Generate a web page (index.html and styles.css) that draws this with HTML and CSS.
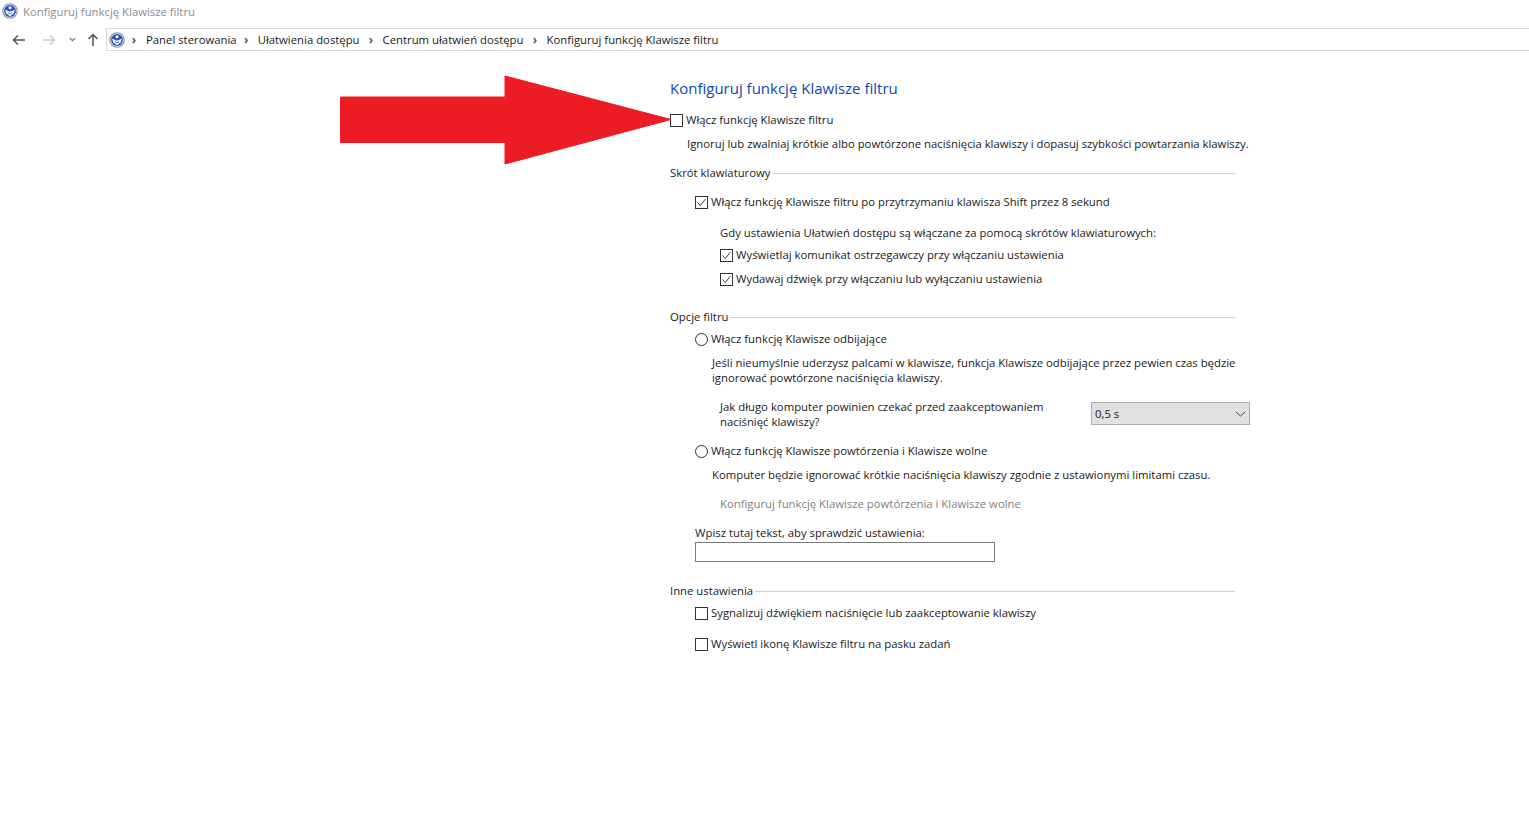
FILE: index.html
```html
<!DOCTYPE html>
<html lang="pl">
<head>
<meta charset="utf-8">
<title>Konfiguruj funkcję Klawisze filtru</title>
<link rel="stylesheet" href="styles.css">
</head>
<body>
<div class="titlebar">
  <svg class="globe" viewBox="0 0 16 16"><circle cx="8" cy="8" r="7.800" fill="#8b90a0"/><circle cx="8" cy="8" r="6.700" fill="#dfe4f2"/><circle cx="8" cy="8" r="5.900" fill="#2b50c4"/><circle cx="8" cy="4.800" r="1.500" fill="#fff"/><path d="M3.200 6.800 8 8.800l4.800-2-.9 3.400L8 13.200l-3.900-3z" fill="#fff"/><path d="M6 9.800 8 11l2-1.200" fill="none" stroke="#2b50c4" stroke-width=".8"/></svg>
  <span class="title-text">Konfiguruj funkcję Klawisze filtru</span>
</div>
<div class="navbar">
  <svg class="nav-icon back" viewBox="0 0 14 12"><path d="M13 6H1.500M6 1.500 1.500 6 6 10.500" fill="none" stroke="#555" stroke-width="1.500"/></svg>
  <svg class="nav-icon forward" viewBox="0 0 14 12"><path d="M1 6h11.500M8 1.500 12.500 6 8 10.500" fill="none" stroke="#ccc" stroke-width="1.500"/></svg>
  <svg class="nav-drop" viewBox="0 0 7 5"><path d="M.8 1 3.500 3.700 6.200 1" fill="none" stroke="#777" stroke-width="1.200"/></svg>
  <svg class="nav-icon up" viewBox="0 0 12 14"><path d="M6 13V1.500M1.500 6 6 1.500 10.500 6" fill="none" stroke="#555" stroke-width="1.500"/></svg>
  <div class="address">
    <svg class="globe" viewBox="0 0 16 16"><circle cx="8" cy="8" r="7.800" fill="#8b90a0"/><circle cx="8" cy="8" r="6.700" fill="#dfe4f2"/><circle cx="8" cy="8" r="5.900" fill="#2b50c4"/><circle cx="8" cy="4.800" r="1.500" fill="#fff"/><path d="M3.200 6.800 8 8.800l4.800-2-.9 3.400L8 13.200l-3.900-3z" fill="#fff"/><path d="M6 9.800 8 11l2-1.200" fill="none" stroke="#2b50c4" stroke-width=".8"/></svg>
    <span class="crumb-sep first">›</span><span class="crumb panel">Panel sterowania</span>
    <span class="crumb-sep">›</span><span class="crumb">Ułatwienia dostępu</span>
    <span class="crumb-sep">›</span><span class="crumb">Centrum ułatwień dostępu</span>
    <span class="crumb-sep">›</span><span class="crumb">Konfiguruj funkcję Klawisze filtru</span>
  </div>
</div>

<main class="content">
  <h1 class="heading">Konfiguruj funkcję Klawisze filtru</h1>
  <label class="row main-check"><span class="box"></span>Włącz funkcję Klawisze filtru</label>
  <p class="text indent-s gap-9">Ignoruj lub zwalniaj krótkie albo powtórzone naciśnięcia klawiszy i dopasuj szybkości powtarzania klawiszy.</p>

  <div class="section gap-14"><span>Skrót klawiaturowy</span><i class="rule"></i></div>
  <label class="row indent-1 gap-14"><span class="box checked"><svg viewBox="0 0 11 11"><path d="M1.500 5.500 4.300 8.500 9.500 2" fill="none" stroke="#444" stroke-width="1"/></svg></span>Włącz funkcję Klawisze filtru po przytrzymaniu klawisza Shift przez 8 sekund</label>
  <p class="text indent-2 gap-16">Gdy ustawienia Ułatwień dostępu są włączane za pomocą skrótów klawiaturowych:</p>
  <label class="row indent-2 gap-7"><span class="box checked"><svg viewBox="0 0 11 11"><path d="M1.500 5.500 4.300 8.500 9.500 2" fill="none" stroke="#444" stroke-width="1"/></svg></span>Wyświetlaj komunikat ostrzegawczy przy włączaniu ustawienia</label>
  <label class="row indent-2 gap-9"><span class="box checked"><svg viewBox="0 0 11 11"><path d="M1.500 5.500 4.300 8.500 9.500 2" fill="none" stroke="#444" stroke-width="1"/></svg></span>Wydawaj dźwięk przy włączaniu lub wyłączaniu ustawienia</label>

  <div class="section gap-23"><span>Opcje filtru</span><i class="rule"></i></div>
  <label class="row indent-1 gap-7"><span class="radio"></span>Włącz funkcję Klawisze odbijające</label>
  <p class="text indent-1b gap-9 para">Jeśli nieumyślnie uderzysz palcami w klawisze, funkcja Klawisze odbijające przez pewien czas będzie ignorować powtórzone naciśnięcia klawiszy.</p>
  <div class="wait-row indent-2 gap-14">
    <p class="text wait-label">Jak długo komputer powinien czekać przed zaakceptowaniem naciśnięć klawiszy?</p>
    <div class="select"><span>0,5 s</span><svg viewBox="0 0 11 6"><path d="M.8.800 5.500 5 10.200.800" fill="none" stroke="#444" stroke-width="1"/></svg></div>
  </div>
  <label class="row indent-1 gap-14"><span class="radio"></span>Włącz funkcję Klawisze powtórzenia i Klawisze wolne</label>
  <p class="text indent-1b gap-9">Komputer będzie ignorować krótkie naciśnięcia klawiszy zgodnie z ustawionymi limitami czasu.</p>
  <p class="text indent-2 gap-14 disabled">Konfiguruj funkcję Klawisze powtórzenia i Klawisze wolne</p>
  <p class="text indent-1 gap-14">Wpisz tutaj tekst, aby sprawdzić ustawienia:</p>
  <div class="textbox indent-1"></div>

  <div class="section gap-21"><span>Inne ustawienia</span><i class="rule"></i></div>
  <label class="row indent-1 gap-7"><span class="box"></span>Sygnalizuj dźwiękiem naciśnięcie lub zaakceptowanie klawiszy</label>
  <label class="row indent-1 gap-16"><span class="box"></span>Wyświetl ikonę Klawisze filtru na pasku zadań</label>
</main>

<svg class="red-arrow" viewBox="0 0 332 90"><path d="M.5 22H165V1L331 44.500 165 89V67.500H.5z" fill="#ed1c24" stroke="#ed1c24" stroke-width="1" stroke-linejoin="round"/></svg>
</body>
</html>
```
FILE: styles.css
```css
* { box-sizing: border-box; }
html, body { margin: 0; padding: 0; background: #fff; }
body {
  width: 1529px;
  height: 816px;
  overflow: hidden;
  position: relative;
  font-family: "Open Sans", "Noto Sans", sans-serif;
  font-size: 11.33px;
  line-height: 15px;
  color: #1a1a1a;
}
p, h1 { margin: 0; font-weight: 400; }

.titlebar { display: flex; align-items: center; height: 22px; padding-left: 2px; }
.globe { width: 16px; height: 16px; flex: none; }
.title-text { margin-left: 5px; color: #8d8d8d; }

.navbar { display: flex; align-items: center; height: 27px; padding-left: 12px; margin-top: 4px; }
.nav-icon { flex: none; }
.back { width: 14px; height: 12px; }
.forward { width: 14px; height: 12px; margin-left: 16px; }
.nav-drop { width: 7px; height: 5px; margin-left: 13px; }
.up { width: 12px; height: 14px; margin-left: 11px; }
.address {
  display: flex;
  align-items: center;
  flex: 1;
  height: 23px;
  margin-left: 7px;
  padding-left: 2px;
  border: 1px solid #d9d9d9;
  border-right: none;
  color: #1a1a1a;
}
.crumb-sep { width: 23px; text-align: center; color: #555; font-size: 12px; font-weight: 700; }
.crumb-sep.first { width: 21px; padding-right: 3px; }
.crumb { white-space: nowrap; }
.panel { margin-right: -2px; }

.content { display: flex; flex-direction: column; width: 600px; margin-left: 670px; margin-top: 24px; }
.heading { font-size: 15px; line-height: 22px; color: #0d47b5; white-space: nowrap; }

.row { display: flex; align-items: center; height: 15px; white-space: nowrap; }
.main-check { margin-top: 13px; }
.text { white-space: nowrap; }
.para { white-space: normal; width: 535px; }

.box {
  flex: none;
  display: block;
  width: 13px;
  height: 13px;
  margin-top: 2px;
  margin-right: 3px;
  border: 1px solid #333;
  background: #fff;
}
.box svg { display: block; width: 11px; height: 11px; }
.radio {
  flex: none;
  width: 13px;
  height: 13px;
  margin-top: 2px;
  margin-right: 3px;
  border: 1px solid #333;
  border-radius: 50%;
}

.section { display: flex; align-items: center; width: 565px; height: 15px; }
.section span { white-space: nowrap; }
.rule { flex: 1; height: 1px; margin-top: 1px; margin-left: 2px; background: #d0d0d0; }

.indent-s { margin-left: 17px; }
.indent-1 { margin-left: 25px; }
.indent-1b { margin-left: 42px; }
.indent-2 { margin-left: 50px; }

.gap-7 { margin-top: 7px; }
.gap-9 { margin-top: 9px; }
.gap-14 { margin-top: 14px; }
.gap-16 { margin-top: 16px; }
.gap-21 { margin-top: 21px; }
.gap-23 { margin-top: 23px; }

.wait-row { display: flex; justify-content: space-between; align-items: flex-start; width: 530px; }
.wait-label { white-space: normal; width: 340px; }
.select {
  display: flex;
  align-items: center;
  justify-content: space-between;
  width: 159px;
  height: 23px;
  margin-top: 3px;
  padding: 0 3px 0 3px;
  border: 1px solid #adadad;
  background: #e1e1e1;
}
.select svg { width: 11px; height: 6px; }

.disabled { color: #7f7f7f; }
.textbox { width: 300px; height: 20px; margin-top: 2px; border: 1px solid #7a7a7a; background: #fff; }

.red-arrow { position: absolute; left: 340px; top: 75px; width: 332px; height: 90px; }
```
